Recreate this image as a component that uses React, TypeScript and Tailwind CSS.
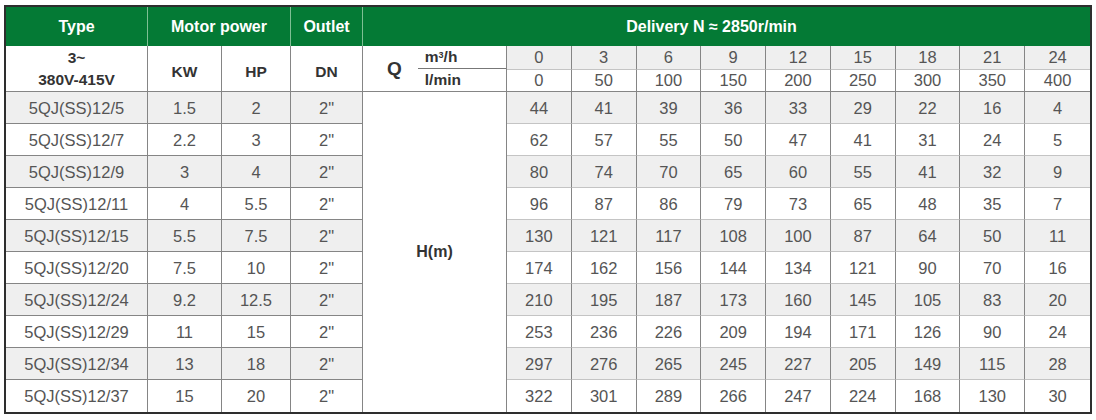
const flowM3 = [0, 3, 6, 9, 12, 15, 18, 21, 24];
const flowL = [0, 50, 100, 150, 200, 250, 300, 350, 400];

const rows = [
  { type: "5QJ(SS)12/5", kw: "1.5", hp: "2", h: [44, 41, 39, 36, 33, 29, 22, 16, 4] },
  { type: "5QJ(SS)12/7", kw: "2.2", hp: "3", h: [62, 57, 55, 50, 47, 41, 31, 24, 5] },
  { type: "5QJ(SS)12/9", kw: "3", hp: "4", h: [80, 74, 70, 65, 60, 55, 41, 32, 9] },
  { type: "5QJ(SS)12/11", kw: "4", hp: "5.5", h: [96, 87, 86, 79, 73, 65, 48, 35, 7] },
  { type: "5QJ(SS)12/15", kw: "5.5", hp: "7.5", h: [130, 121, 117, 108, 100, 87, 64, 50, 11] },
  { type: "5QJ(SS)12/20", kw: "7.5", hp: "10", h: [174, 162, 156, 144, 134, 121, 90, 70, 16] },
  { type: "5QJ(SS)12/24", kw: "9.2", hp: "12.5", h: [210, 195, 187, 173, 160, 145, 105, 83, 20] },
  { type: "5QJ(SS)12/29", kw: "11", hp: "15", h: [253, 236, 226, 209, 194, 171, 126, 90, 24] },
  { type: "5QJ(SS)12/34", kw: "13", hp: "18", h: [297, 276, 265, 245, 227, 205, 149, 115, 28] },
  { type: "5QJ(SS)12/37", kw: "15", hp: "20", h: [322, 301, 289, 266, 247, 224, 168, 130, 30] },
];

const cell = "border-r border-b border-[#858585] text-center align-middle p-0";
const dataCell = "border-r border-b border-r-[#858585] border-b-[#c4c4c4] text-center align-middle p-0";

export default function App() {
  return (
    <div className="bg-white w-[1096px] h-[420px] pl-[4px] pt-[5px] font-['Liberation_Sans',Arial,sans-serif]">
      <table className="table-fixed border-separate border-spacing-0 w-[1088px] border-2 border-[#2e2e2e] text-[16.5px] leading-[20px] text-[#555]">
        <colgroup>
          <col className="w-[142px]" />
          <col className="w-[74px]" />
          <col className="w-[69px]" />
          <col className="w-[72px]" />
          <col className="w-[144px]" />
          {flowM3.map((q) => (
            <col key={q} />
          ))}
        </colgroup>
        <thead>
          <tr className="h-[39px] bg-[#047a35] text-white font-bold text-[16px]">
            <th className="p-0 border-r border-[#7fbf94]">Type</th>
            <th colSpan={2} className="p-0 border-r border-[#7fbf94]">Motor power</th>
            <th className="p-0 border-r border-[#7fbf94]">Outlet</th>
            <th colSpan={10} className="p-0 pr-[30px]">Delivery N ≈ 2850r/min</th>
          </tr>
        </thead>
        <tbody>
          <tr className="h-[23px]">
            <td rowSpan={2} className={`${cell} font-bold text-[#333] text-[15.5px] leading-[22px]`}>
              3~
              <br />
              380V-415V
            </td>
            <td rowSpan={2} className={`${cell} font-bold text-[#333] text-[15.5px] pt-[6px]`}>KW</td>
            <td rowSpan={2} className={`${cell} font-bold text-[#333] text-[15.5px] pt-[6px]`}>HP</td>
            <td rowSpan={2} className={`${cell} font-bold text-[#333] text-[15.5px] pt-[6px]`}>DN</td>
            <td rowSpan={2} className={cell}>
              <div className="flex items-center h-[45px] text-[#333] font-bold">
                <span className="pl-[24px] pr-[16px] text-[19px]">Q</span>
                <div className="flex-1 flex flex-col text-left text-[15.5px]">
                  <div className="h-[23px] border-b border-[#777] pl-[7px] leading-[22px]">
                    m<sup className="text-[9px]">3</sup>/h
                  </div>
                  <div className="h-[22px] pl-[7px] leading-[22px]">l/min</div>
                </div>
              </div>
            </td>
            {flowM3.map((q, j) => (
              <td key={q} className={`${dataCell} bg-[#efefef] ${j === 8 ? "border-r-0" : ""}`}>
                {q}
              </td>
            ))}
          </tr>
          <tr className="h-[22px]">
            {flowL.map((q, j) => (
              <td key={q} className={`${cell} ${j === 8 ? "border-r-0" : ""}`}>
                {q}
              </td>
            ))}
          </tr>
          {rows.map((r, i) => {
            const bg = i % 2 === 0 ? "bg-[#efefef]" : "bg-white";
            const last = i === rows.length - 1 ? "border-b-0" : "";
            return (
              <tr key={r.type} className={`h-[32px] ${bg}`}>
                <td className={`${cell} ${last}`}>{r.type}</td>
                <td className={`${cell} ${last}`}>{r.kw}</td>
                <td className={`${cell} ${last}`}>{r.hp}</td>
                <td className={`${cell} ${last}`}>2"</td>
                {i === 0 && (
                  <td rowSpan={rows.length} className={`${cell} border-b-0 bg-white font-bold text-[#333] text-[16px]`}>
                    H(m)
                  </td>
                )}
                {r.h.map((v, j) => (
                  <td key={j} className={`${dataCell} ${last} ${j === r.h.length - 1 ? "border-r-0" : ""}`}>
                    {v}
                  </td>
                ))}
              </tr>
            );
          })}
        </tbody>
      </table>
    </div>
  );
}
